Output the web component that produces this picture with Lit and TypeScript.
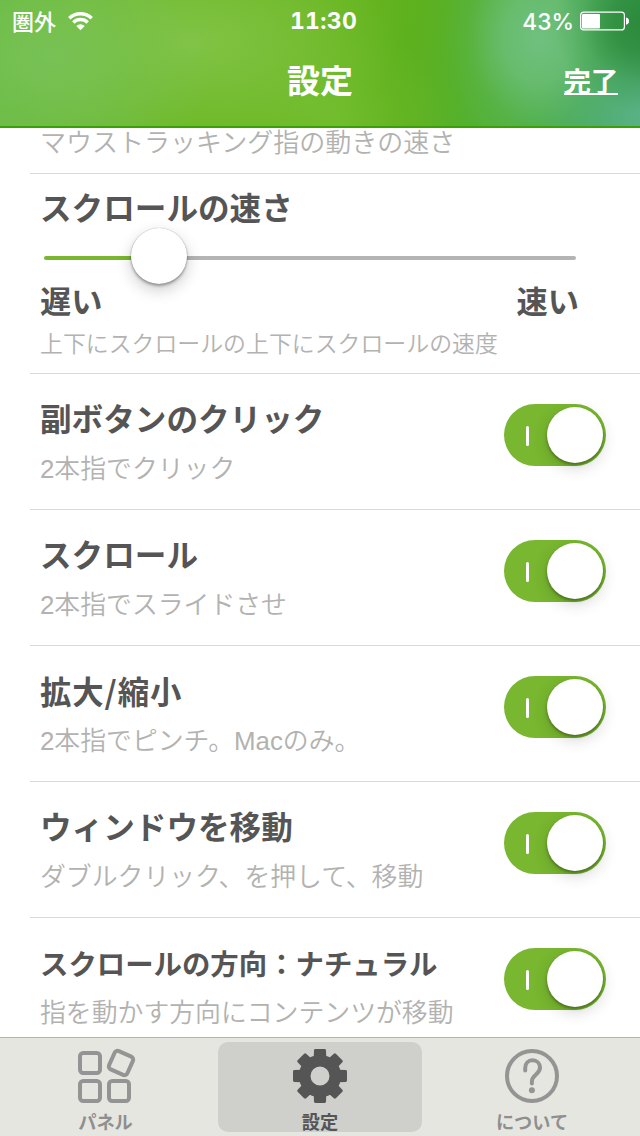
import { LitElement, html, css, svg } from "lit";
import { customElement, property } from "lit/decorators.js";

@customElement("toggle-switch")
class ToggleSwitch extends LitElement {
  static styles = css`
    :host { display: block; flex: none; }
    .track {
      box-sizing: border-box; width: 102px; height: 62px; border-radius: 31px;
      background: #78b72f; display: flex; align-items: center;
      justify-content: space-between; padding: 0 3px 0 22px;
    }
    .mark { width: 3px; height: 20px; border-radius: 1.5px; background: #fff; margin-top: 2px; }
    .knob {
      width: 56px; height: 56px; border-radius: 50%; background: #fff;
      box-shadow: 0 2px 3px rgba(0,0,0,.32), 0 5px 16px rgba(0,0,0,.16);
    }
  `;
  render() {
    return html`<div class="track"><div class="mark"></div><div class="knob"></div></div>`;
  }
}

@customElement("speed-slider")
class SpeedSlider extends LitElement {
  @property({ type: Number }) value = 0;
  static styles = css`
    :host { display: block; }
    .slider { display: flex; align-items: center; height: 58px; }
    .done { height: 4px; border-radius: 2px 0 0 2px; background: #78b72f; margin-top: 3px; }
    .rest { flex: 1; height: 4px; border-radius: 0 2px 2px 0; background: #b4b4b4; margin-top: 3px; }
    .knob {
      flex: none; width: 56px; height: 56px; border-radius: 50%; background: #fff;
      box-shadow: 0 0 1px rgba(0,0,0,.35), 0 2px 3px rgba(0,0,0,.32), 0 6px 16px rgba(0,0,0,.2);
      z-index: 1;
    }
  `;
  render() {
    return html`<div class="slider">
      <div class="done" style="width:${this.value}px"></div>
      <div class="knob"></div>
      <div class="rest"></div>
    </div>`;
  }
}

const rows = [
  { title: "副ボタンのクリック", note: "2本指でクリック", size: "" },
  { title: "スクロール", note: "2本指でスライドさせ", size: "" },
  { title: "拡大/縮小", note: "2本指でピンチ。Macのみ。", size: "spaced" },
  { title: "ウィンドウを移動", note: "ダブルクリック、を押して、移動", size: "" },
  { title: "スクロールの方向：ナチュラル", note: "指を動かす方向にコンテンツが移動", size: "small" },
];

const teeth = [0, 45, 90, 135, 180, 225, 270, 315];

const panelIcon = html`<svg class="icon" width="60" height="56" viewBox="0 0 60 56">
  <g fill="none" stroke="#949494" stroke-width="4">
    <rect x="4" y="5" width="20" height="20" rx="3.2" />
    <rect x="4" y="33" width="20" height="20" rx="3.2" />
    <rect x="33" y="33" width="20" height="20" rx="3.2" />
    <rect x="35" y="5" width="20" height="20" rx="3.2" transform="rotate(24 45 15)" />
  </g>
</svg>`;

const gearIcon = html`<svg class="icon" width="56" height="56" viewBox="-28 -28 56 56">
  <g fill="#555">
    ${teeth.map((a) => svg`<path d="M-6.3 -18 L-6 -25.6 Q-6 -27 -4.6 -27 H4.6 Q6 -27 6 -25.6 L6.3 -18 Z" transform="rotate(${a})" />`)}
  </g>
  <circle r="15.3" fill="none" stroke="#555" stroke-width="11.6" />
</svg>`;

const helpIcon = html`<svg class="icon" width="56" height="56" viewBox="0 0 56 56">
  <circle cx="28" cy="28" r="25" fill="none" stroke="#949494" stroke-width="4" />
  <path d="M21.2 22.6 V20.2 C21.2 15 24.5 12.3 28.4 12.3 C32.8 12.3 36 15.4 36 19.6 C36 26.6 27.9 26.8 27.9 33.2 V35.4"
    fill="none" stroke="#949494" stroke-width="4" stroke-linecap="round" />
  <circle cx="27.9" cy="42.3" r="3" fill="#949494" />
</svg>`;

@customElement("app-root")
class AppRoot extends LitElement {
  static styles = css`
    :host {
      display: flex; flex-direction: column; width: 640px; height: 1136px; overflow: hidden;
      background: #fff; color: #555;
      font-family: "Liberation Sans", "Noto Sans CJK JP", sans-serif;
    }
    .header {
      box-sizing: border-box; flex: none; height: 128px; color: #fff; border-bottom: 2px solid #3ba007;
      background:
        radial-gradient(ellipse 90px 90px at 645px 22px, #2b893a 0%, rgba(44,139,60,.8) 35%, rgba(55,150,75,.3) 70%, rgba(60,155,80,0) 100%),
        radial-gradient(ellipse 110px 75px at 650px 118px, #5cb388 0%, rgba(88,176,130,.45) 50%, rgba(88,176,130,0) 100%),
        radial-gradient(ellipse 100px 125px at 538px 38px, rgba(113,193,130,.95) 0%, rgba(111,192,125,.75) 35%, rgba(100,186,105,.25) 70%, rgba(90,180,90,0) 100%),
        radial-gradient(ellipse 170px 130px at 50px 58px, rgba(120,194,88,.9) 0%, rgba(118,193,82,.45) 50%, rgba(118,193,82,0) 100%),
        radial-gradient(ellipse 210px 110px at 190px 42px, #82c345 0%, rgba(128,194,66,.55) 50%, rgba(128,194,66,0) 100%),
        radial-gradient(ellipse 130px 90px at 330px 118px, rgba(114,190,48,.9) 0%, rgba(112,188,45,.35) 50%, rgba(112,188,45,0) 100%),
        linear-gradient(96deg, #69bb44 0, #6cba3a 90px, #69b722 180px, #6ab722 290px, #66b51f 350px, #5eb11e 410px, #56b028 460px, #50b03c 520px, #48aa54 590px, #48a868 640px);
    }
    .status { display: grid; grid-template-columns: 1fr 1fr 1fr; align-items: center; height: 40px; }
    .carrier { display: flex; align-items: center; gap: 12px; padding-left: 12px; font: 500 22px/38px "Noto Sans CJK JP", sans-serif; height: 38px; }
    .place { margin-top: -3px; }
    .clock { text-align: center; font: 700 23px/42px Inter, sans-serif; font-feature-settings: "tnum"; letter-spacing: .3px; padding-left: 7px; }
    .power { display: flex; align-items: center; justify-content: flex-end; gap: 6px; padding-right: 11px; font: 500 22.7px/40px Inter, sans-serif; }
    .percent { padding-top: 1px; }
    .nav { display: grid; grid-template-columns: 1fr auto 1fr; align-items: center; height: 79px; }
    .heading { grid-column: 2; font: 700 33px/40px "Noto Sans CJK JP", sans-serif; margin-top: -2px; }
    .finish { justify-self: end; margin: 2px 22px 0 0; font: 700 27.5px/27px "Noto Sans CJK JP", sans-serif; border-bottom: 2px solid #fff; height: 26px; letter-spacing: -.3px; }
    .list { flex: 1; min-height: 0; overflow: hidden; padding-left: 30px; }
    .row { box-sizing: border-box; border-bottom: 1px solid #d9d9d9; padding-left: 10px; }
    .tracking { height: 46px; padding-top: 1px; }
    .title { font-weight: 700; font-size: 31.6px; line-height: 36px; white-space: nowrap; }
    .title.small { font-size: 28.4px; padding-top: 1px; margin-bottom: -1px; }
    .title.spaced { font-family: "Noto Sans CJK JP", sans-serif; letter-spacing: .9px; font-size: 31.4px; margin-top: -1px; margin-bottom: 1px; }
    .note { font-weight: 350; font-size: 25.85px; line-height: 36px; color: #b2b2b0; white-space: nowrap; }
    .tracking .note { line-height: 28px; font-size: 26px; }
    .speed { height: 200px; padding-top: 17px; }
    .speed .slide { display: block; width: 532px; margin: 0 0 0 4px; }
    .ends { display: flex; justify-content: space-between; width: 539px; }
    .ends .title { font-size: 31.2px; }
    .speed .note { font-size: 22.9px; margin-top: 5px; }
    .option { height: 136px; padding: 28px 34px 0 10px; display: flex; justify-content: space-between; align-items: flex-start; }
    .text { display: flex; flex-direction: column; gap: 13px; }
    .option toggle-switch { margin-top: 2px; }
    .tabs {
      box-sizing: border-box; flex: none; height: 99px; border-top: 1px solid #b2b3b0; background: #e5e6e0;
      display: grid; grid-template-columns: 204px 204px 204px; column-gap: 8px; justify-content: center; padding-top: 4px;
    }
    .tab {
      height: 90px; border-radius: 10px; color: #8f8f8f; display: flex; flex-direction: column; align-items: center;
      font: 700 18.2px/24px "Noto Sans CJK JP", sans-serif; padding-top: 6px; box-sizing: border-box;
    }
    .tab:first-child { padding-right: 5px; }
    .active { background: #cfd0cb; color: #555; }
    .icon { display: block; flex: none; margin-bottom: 5px; }
  `;
  render() {
    return html`
      <div class="header">
        <div class="status">
          <div class="carrier">
            <span class="place">圏外</span>
            <svg width="25" height="19" viewBox="0 0 25 19">
              <g fill="none" stroke="#fff" stroke-width="3.4">
                <path d="M1.3 6.3 A16 16 0 0 1 23.7 6.3" />
                <path d="M5.3 10.5 A10.3 10.3 0 0 1 19.7 10.5" />
              </g>
              <path d="M12.5 18.3 L8.3 14 A6 6 0 0 1 16.7 14 Z" fill="#fff" />
            </svg>
          </div>
          <div class="clock">11:30</div>
          <div class="power">
            <span class="percent">43%</span>
            <svg width="49" height="20" viewBox="0 0 49 20">
              <rect x=".6" y="1.1" width="43.8" height="17.8" rx="3" fill="none" stroke="#fff" stroke-width="1.2" />
              <rect x="2" y="3" width="18" height="14.5" rx="1" fill="#fff" />
              <path d="M46 6.5 Q49 7 49 10.1 Q49 13.2 46 13.7 Z" fill="#fff" />
            </svg>
          </div>
        </div>
        <div class="nav">
          <div class="heading">設定</div>
          <div class="finish">完了</div>
        </div>
      </div>
      <div class="list">
        <div class="row tracking"><div class="note">マウストラッキング指の動きの速さ</div></div>
        <div class="row speed">
          <div class="title">スクロールの速さ</div>
          <speed-slider class="slide" .value=${87}></speed-slider>
          <div class="ends"><div class="title">遅い</div><div class="title">速い</div></div>
          <div class="note">上下にスクロールの上下にスクロールの速度</div>
        </div>
        ${rows.map((r) => html`<div class="row option">
          <div class="text">
            <div class="title ${r.size}">${r.title}</div>
            <div class="note">${r.note}</div>
          </div>
          <toggle-switch></toggle-switch>
        </div>`)}
      </div>
      <div class="tabs">
        <div class="tab">${panelIcon}<span>パネル</span></div>
        <div class="tab active">${gearIcon}<span>設定</span></div>
        <div class="tab">${helpIcon}<span>について</span></div>
      </div>`;
  }
}
